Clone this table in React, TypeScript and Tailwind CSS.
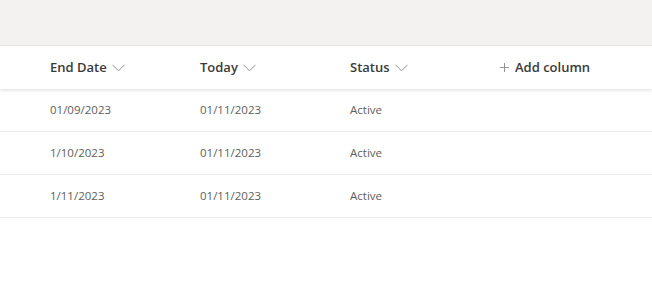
const rows = [
  { end: "01/09/2023", today: "01/11/2023", status: "Active" },
  { end: "1/10/2023", today: "01/11/2023", status: "Active" },
  { end: "1/11/2023", today: "01/11/2023", status: "Active" },
];

const headers = ["End Date", "Today", "Status"];

function Chevron() {
  return (
    <svg width="13" height="8" viewBox="0 0 13 8" className="text-[#8a8886]">
      <path d="M0.5 0.8 L6.5 6.8 L12.5 0.8" fill="none" stroke="currentColor" strokeWidth="0.9" />
    </svg>
  );
}

export default function App() {
  return (
    <div
      className="h-[300px] w-[652px] overflow-hidden bg-white"
      style={{ fontFamily: '"Segoe UI", "Open Sans", "Noto Sans", sans-serif' }}
    >
      <div className="h-[46px] border-b border-[#e6e4e2] bg-[#f3f2f1]" />

      <div className="relative z-10 flex h-[43px] items-center bg-white pl-[50px] shadow-[0_1.6px_3.6px_rgba(0,0,0,0.13),0_0.3px_0.9px_rgba(0,0,0,0.1)]">
        {headers.map((h) => (
          <div key={h} className="flex w-[150px] items-center gap-[5px] text-[13px] font-semibold text-[#3b3a39]">
            <span>{h}</span>
            <Chevron />
          </div>
        ))}
        <div className="flex items-center gap-[6px] text-[13px] font-semibold text-[#3b3a39]">
          <svg width="9" height="9" viewBox="0 0 9 9" className="text-[#8a8886]">
            <path d="M4.5 0 V9 M0 4.5 H9" fill="none" stroke="currentColor" strokeWidth="0.9" />
          </svg>
          <span>Add column</span>
        </div>
      </div>

      <div>
        {rows.map((r, i) => (
          <div
            key={i}
            className="flex h-[43px] items-center border-b border-[#edebe9] pl-[50px] text-[11.5px] text-[#605e5c]"
          >
            <div className="w-[150px]">{r.end}</div>
            <div className="w-[150px]">{r.today}</div>
            <div className="w-[150px]">{r.status}</div>
          </div>
        ))}
      </div>
    </div>
  );
}
